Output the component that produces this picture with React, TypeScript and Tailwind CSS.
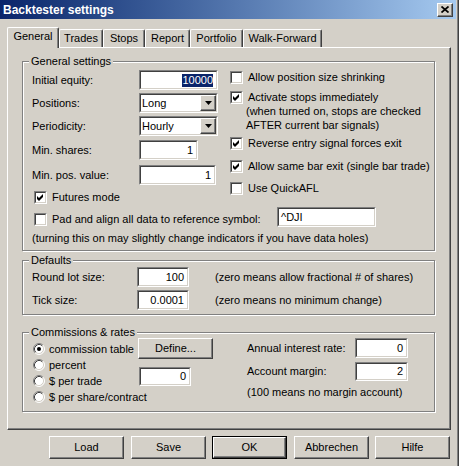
import React from 'react';

type Kids = { className?: string; children?: React.ReactNode };

// classic 2px sunken edge (edit boxes, checkboxes, combo boxes)
const Sunken = ({ className = '', children }: Kids) => (
  <div className={`border border-t-[#808080] border-l-[#808080] border-r-white border-b-white ${className}`}>
    <div className="h-full w-full border border-t-[#404040] border-l-[#404040] border-r-[#d4d0c8] border-b-[#d4d0c8] bg-white">
      {children}
    </div>
  </div>
);

const Raised = ({ className = '', children }: Kids) => (
  <div
    className={`border border-t-white border-l-white border-r-[#404040] border-b-[#404040] bg-[#d4d0c8] shadow-[inset_-1px_-1px_0_#808080] ${className}`}
  >
    {children}
  </div>
);

const Edit = ({
  value,
  className = '',
  selected = false,
  left = false,
}: {
  value: string;
  className?: string;
  selected?: boolean;
  left?: boolean;
}) => (
  <Sunken className={`shrink-0 ${className}`}>
    <div className={`flex h-full items-center ${left ? 'justify-start pl-[2px]' : 'justify-end pr-[3px]'}`}>
      <span className={`leading-[13px] ${selected ? 'bg-[#0a246a] text-white' : ''}`}>{value}</span>
    </div>
  </Sunken>
);

const Combo = ({ value }: { value: string }) => (
  <Sunken className="h-[20px] w-[79px] shrink-0">
    <div className="flex h-full items-center">
      <span className="flex-1 pl-[1px] leading-[13px]">{value}</span>
      <Raised className="flex h-[16px] w-[16px] items-center justify-center">
        <svg width="7" height="4" viewBox="0 0 7 4" className="block">
          <polygon points="0,0 7,0 3.5,4" fill="#000" />
        </svg>
      </Raised>
    </div>
  </Sunken>
);

const Check = ({ checked = false }: { checked?: boolean }) => (
  <Sunken className="h-[13px] w-[13px] shrink-0">
    {checked && (
      <svg width="9" height="9" viewBox="0 0 9 9" className="block">
        <polygon points="1,3 3,5 7,1 7,4 3,8 1,6" fill="#000" />
      </svg>
    )}
  </Sunken>
);

const Radio = ({ checked = false }: { checked?: boolean }) => (
  <svg width="12" height="12" viewBox="0 0 12 12" className="block shrink-0">
    <circle cx="6" cy="6" r="5" fill="#fff" />
    <path d="M2.11 9.89 A5.5 5.5 0 0 1 9.89 2.11" fill="none" stroke="#808080" />
    <path d="M9.89 2.11 A5.5 5.5 0 0 1 2.11 9.89" fill="none" stroke="#fff" />
    <path d="M2.82 9.18 A4.5 4.5 0 0 1 9.18 2.82" fill="none" stroke="#404040" />
    <path d="M9.18 2.82 A4.5 4.5 0 0 1 2.82 9.18" fill="none" stroke="#d4d0c8" />
    {checked && <circle cx="6" cy="6" r="2" fill="#000" />}
  </svg>
);

const Group = ({ title, className = '', children }: Kids & { title: string }) => (
  <div className={`relative w-[413px] border border-[#808080] shadow-[inset_1px_1px_0_#fff,1px_1px_0_#fff] ${className}`}>
    <span className="absolute -top-[7px] left-[6px] bg-[#d4d0c8] px-[2px] leading-[13px]">{title}</span>
    {children}
  </div>
);

const Button = ({ label, isDefault = false }: { label: string; isDefault?: boolean }) =>
  isDefault ? (
    <div className="h-[23px] w-[75px] border border-black">
      <Raised className="flex h-full w-full items-center justify-center">{label}</Raised>
    </div>
  ) : (
    <Raised className="flex h-[23px] w-[75px] items-center justify-center">{label}</Raised>
  );

const tabs = [
  { name: 'Trades', w: 'w-[44px]' },
  { name: 'Stops', w: 'w-[42px]' },
  { name: 'Report', w: 'w-[45px]' },
  { name: 'Portfolio', w: 'w-[53px]' },
  { name: 'Walk-Forward', w: 'w-[79px]' },
];

export default function App() {
  return (
    <div className="flex h-[466px] w-[459px] overflow-hidden border-r border-[#404040] bg-[#d4d0c8] font-['Liberation_Sans',Arial,sans-serif] text-[11px] text-black">
      <div className="flex w-[458px] flex-col border-r border-[#808080]">
        {/* title bar */}
        <div className="flex h-[19px] w-[456px] items-center justify-between bg-linear-to-r from-[#0a246a] to-[#a6caf0] pl-[3px] pr-[3px]">
          <span className="text-[12px] font-bold leading-[14px] text-white">Backtester settings</span>
          <Raised className="flex h-[14px] w-[16px] items-center justify-center">
            <svg width="8" height="7" viewBox="0 0 8 7" className="block">
              <path d="M0.5 0.5 L7.5 6.5 M7.5 0.5 L0.5 6.5" stroke="#000" strokeWidth="1.7" />
            </svg>
          </Raised>
        </div>

        {/* tab strip */}
        <div className="ml-[7px] mt-[8px] flex h-[20px] items-end">
          <div className="relative z-10 -mb-px h-[21px] w-[52px] rounded-t-[2px] border-l border-t border-r border-white border-r-[#404040] bg-[#d4d0c8] pt-[2px] text-center leading-[13px] shadow-[inset_-1px_0_0_#808080]">
            General
          </div>
          {tabs.map((t) => (
            <div
              key={t.name}
              className={`h-[18px] ${t.w} rounded-t-[2px] border-l border-t border-r border-white border-r-[#404040] pt-[2px] text-center leading-[13px] shadow-[inset_-1px_0_0_#808080]`}
            >
              {t.name}
            </div>
          ))}
        </div>

        {/* tab page */}
        <div className="ml-[7px] h-[383px] w-[444px] border border-white border-r-[#404040] border-b-[#404040] pl-[14px] pt-[13px] shadow-[inset_-1px_-1px_0_#808080]">
          <Group title="General settings" className="h-[190px]">
            <div className="flex pl-[9px]">
              <div className="flex w-[198px] flex-col">
                <div className="mt-[8px] flex h-[20px] items-center">
                  <span className="w-[107px]">Initial equity:</span>
                  <Edit value="10000" selected className="h-[20px] w-[79px]" />
                </div>
                <div className="mt-[3px] flex h-[20px] items-center">
                  <span className="w-[107px]">Positions:</span>
                  <Combo value="Long" />
                </div>
                <div className="mt-[3px] flex h-[20px] items-center">
                  <span className="w-[107px]">Periodicity:</span>
                  <Combo value="Hourly" />
                </div>
                <div className="mt-[4px] flex h-[20px] items-center">
                  <span className="w-[107px]">Min. shares:</span>
                  <Edit value="1" className="h-[20px] w-[59px]" />
                </div>
                <div className="mt-[5px] flex h-[20px] items-center">
                  <span className="w-[107px]">Min. pos. value:</span>
                  <Edit value="1" className="h-[20px] w-[77px]" />
                </div>
                <div className="mt-[6px] flex h-[13px] items-center pl-[2px]">
                  <Check checked />
                  <span className="ml-[5px]">Futures mode</span>
                </div>
              </div>

              <div className="flex flex-col">
                <div className="mt-[9px] flex h-[13px] items-center">
                  <Check />
                  <span className="ml-[5px]">Allow position size shrinking</span>
                </div>
                <div className="mt-[7px] flex h-[13px] items-center">
                  <Check checked />
                  <span className="ml-[5px]">Activate stops immediately</span>
                </div>
                <div className="pl-[16px] leading-[14px]">
                  (when turned on, stops are checked
                  <br />
                  AFTER current bar signals)
                </div>
                <div className="mt-[5px] flex h-[13px] items-center">
                  <Check checked />
                  <span className="ml-[5px]">Reverse entry signal forces exit</span>
                </div>
                <div className="mt-[10px] flex h-[13px] items-center">
                  <Check checked />
                  <span className="ml-[5px]">Allow same bar exit (single bar trade)</span>
                </div>
                <div className="mt-[9px] flex h-[13px] items-center">
                  <Check />
                  <span className="ml-[5px]">Use QuickAFL</span>
                </div>
              </div>
            </div>

            <div className="mt-[3px] flex items-start pl-[9px]">
              <div className="mt-[6px] flex h-[13px] w-[245px] items-center pl-[2px]">
                <Check />
                <span className="ml-[5px]">Pad and align all data to reference symbol:</span>
              </div>
              <Edit value="^DJI" left className="h-[20px] w-[99px]" />
            </div>
            <div className="mt-[4px] pl-[9px] leading-[14px]">
              (turning this on may slightly change indicators if you have data holes)
            </div>
          </Group>

          <Group title="Defaults" className="mt-[9px] h-[55px]">
            <div className="pl-[9px]">
              <div className="mt-[6px] flex h-[20px] items-center">
                <span className="w-[105px]">Round lot size:</span>
                <Edit value="100" className="h-[20px] w-[52px]" />
                <span className="ml-[26px]">(zero means allow fractional # of shares)</span>
              </div>
              <div className="mt-[3px] flex h-[20px] items-center">
                <span className="w-[105px]">Tick size:</span>
                <Edit value="0.0001" className="h-[20px] w-[52px]" />
                <span className="ml-[26px]">(zero means no minimum change)</span>
              </div>
            </div>
          </Group>

          <Group title="Commissions & rates" className="mt-[17px] h-[80px]">
            <div className="flex pl-[10px]">
              <div className="mt-[8px] flex w-[105px] flex-col">
                {[
                  ['commission table', true],
                  ['percent', false],
                  ['$ per trade', false],
                  ['$ per share/contract', false],
                ].map(([label, on]) => (
                  <div key={label as string} className="flex h-[16px] items-center">
                    <Radio checked={on as boolean} />
                    <span className="ml-[4px] whitespace-nowrap">{label as string}</span>
                  </div>
                ))}
              </div>
              <div className="flex w-[109px] flex-col">
                <Raised className="mt-[5px] flex h-[21px] w-[75px] items-center justify-center">Define...</Raised>
                <Edit value="0" className="ml-[1px] mt-[8px] h-[19px] w-[52px]" />
              </div>
              <div className="flex flex-col">
                <div className="mt-[5px] flex h-[20px] items-center">
                  <span className="w-[108px]">Annual interest rate:</span>
                  <Edit value="0" className="h-[20px] w-[53px]" />
                </div>
                <div className="mt-[4px] flex h-[19px] items-center">
                  <span className="w-[108px]">Account margin:</span>
                  <Edit value="2" className="h-[19px] w-[53px]" />
                </div>
                <div className="mt-[4px] leading-[14px]">(100 means no margin account)</div>
              </div>
            </div>
          </Group>
        </div>

        {/* dialog buttons */}
        <div className="ml-[49px] mt-[6px] flex">
          <Button label="Load" />
          <div className="ml-[7px]">
            <Button label="Save" />
          </div>
          <div className="ml-[6px]">
            <Button label="OK" isDefault />
          </div>
          <div className="ml-[7px]">
            <Button label="Abbrechen" />
          </div>
          <div className="ml-[6px]">
            <Button label="Hilfe" />
          </div>
        </div>
      </div>
    </div>
  );
}
